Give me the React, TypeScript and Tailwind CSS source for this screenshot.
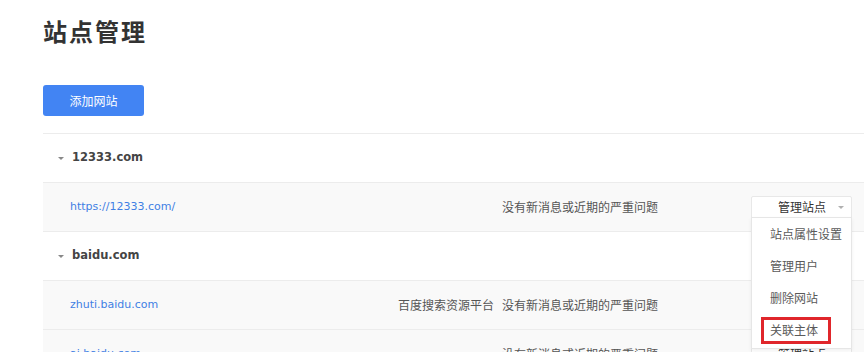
import { useState } from "react";

type Site = { url: string; source?: string; status: string };
type Group = { domain: string; sites: Site[] };

const groups: Group[] = [
  { domain: "12333.com", sites: [{ url: "https://12333.com/", status: "没有新消息或近期的严重问题" }] },
  {
    domain: "baidu.com",
    sites: [
      { url: "zhuti.baidu.com", source: "百度搜索资源平台", status: "没有新消息或近期的严重问题" },
      { url: "ai.baidu.com", status: "没有新消息或近期的严重问题" },
    ],
  },
];

const menuItems = ["站点属性设置", "管理用户", "删除网站", "关联主体"];

const cjk = "font-['Noto_Sans_CJK_SC',sans-serif]";

function Caret({ className }: { className?: string }) {
  return (
    <svg width="6" height="3" viewBox="0 0 6 3" className={className}>
      <path d="M0 0h6L3 3z" fill="currentColor" />
    </svg>
  );
}

function ManageButton({ open }: { open: boolean }) {
  return (
    <div className="relative w-[101px]">
      <div className="flex h-[22px] items-center rounded-t-[2px] border border-[#e8e8e8] bg-white pl-[26px] pr-[7px] text-[12px] text-[#333]">
        <span className="flex-1">管理站点</span>
        <Caret className="text-[#b0b0b0]" />
      </div>
      {open && (
        <div className="absolute left-0 top-[21px] z-10 w-[101px] border border-[#e6e6e6] bg-white pb-[2px] shadow-[0_2px_4px_rgba(0,0,0,0.06)]">
          {menuItems.map((item, i) => (
            <div key={item} className="flex h-[32px] items-center pl-[9px] text-[12px] text-[#5a5a5a]">
              {i === 3 ? (
                <span className="inline-flex h-[27px] w-[70px] items-center border-[3px] border-[#e0262b] pl-[6px]">{item}</span>
              ) : (
                <span className="pl-[9px]">{item}</span>
              )}
            </div>
          ))}
        </div>
      )}
    </div>
  );
}

export default function App() {
  const [openUrl] = useState("https://12333.com/");

  return (
    <div className={`h-[352px] w-[864px] overflow-hidden bg-white pl-[43px] pt-[13px] ${cjk}`}>
      <h1 className="text-[24px] font-bold leading-[36px] tracking-[2px] text-[#333]">站点管理</h1>

      <button className="mt-[36px] h-[31px] w-[101px] rounded-[3px] bg-[#4284f3] text-[12px] text-white">添加网站</button>

      <div className="mt-[17px] w-[860px] border-t border-[#ececec]">
        {groups.map((g) => (
          <div key={g.domain}>
            <div className="flex h-[49px] items-center border-b border-[#ececec] bg-white pl-[15px]">
              <Caret className="mr-[8px] text-[#888]" />
              <span className="font-['DejaVu_Sans',sans-serif] text-[11.5px] font-bold text-[#444]">{g.domain}</span>
            </div>
            {g.sites.map((s) => (
              <div key={s.url} className="flex h-[49px] items-center border-b border-[#ececec] bg-[#f9f9f9] pl-[27px]">
                <span className="w-[300px] font-['DejaVu_Sans',sans-serif] text-[11px] text-[#3f80e4]">{s.url}</span>
                <span className="w-[124px] text-right text-[12px] text-[#555]">{s.source ?? ""}</span>
                <span className="ml-[8px] w-[249px] text-[12px] text-[#555]">{s.status}</span>
                <ManageButton open={s.url === openUrl} />
              </div>
            ))}
          </div>
        ))}
      </div>
    </div>
  );
}
